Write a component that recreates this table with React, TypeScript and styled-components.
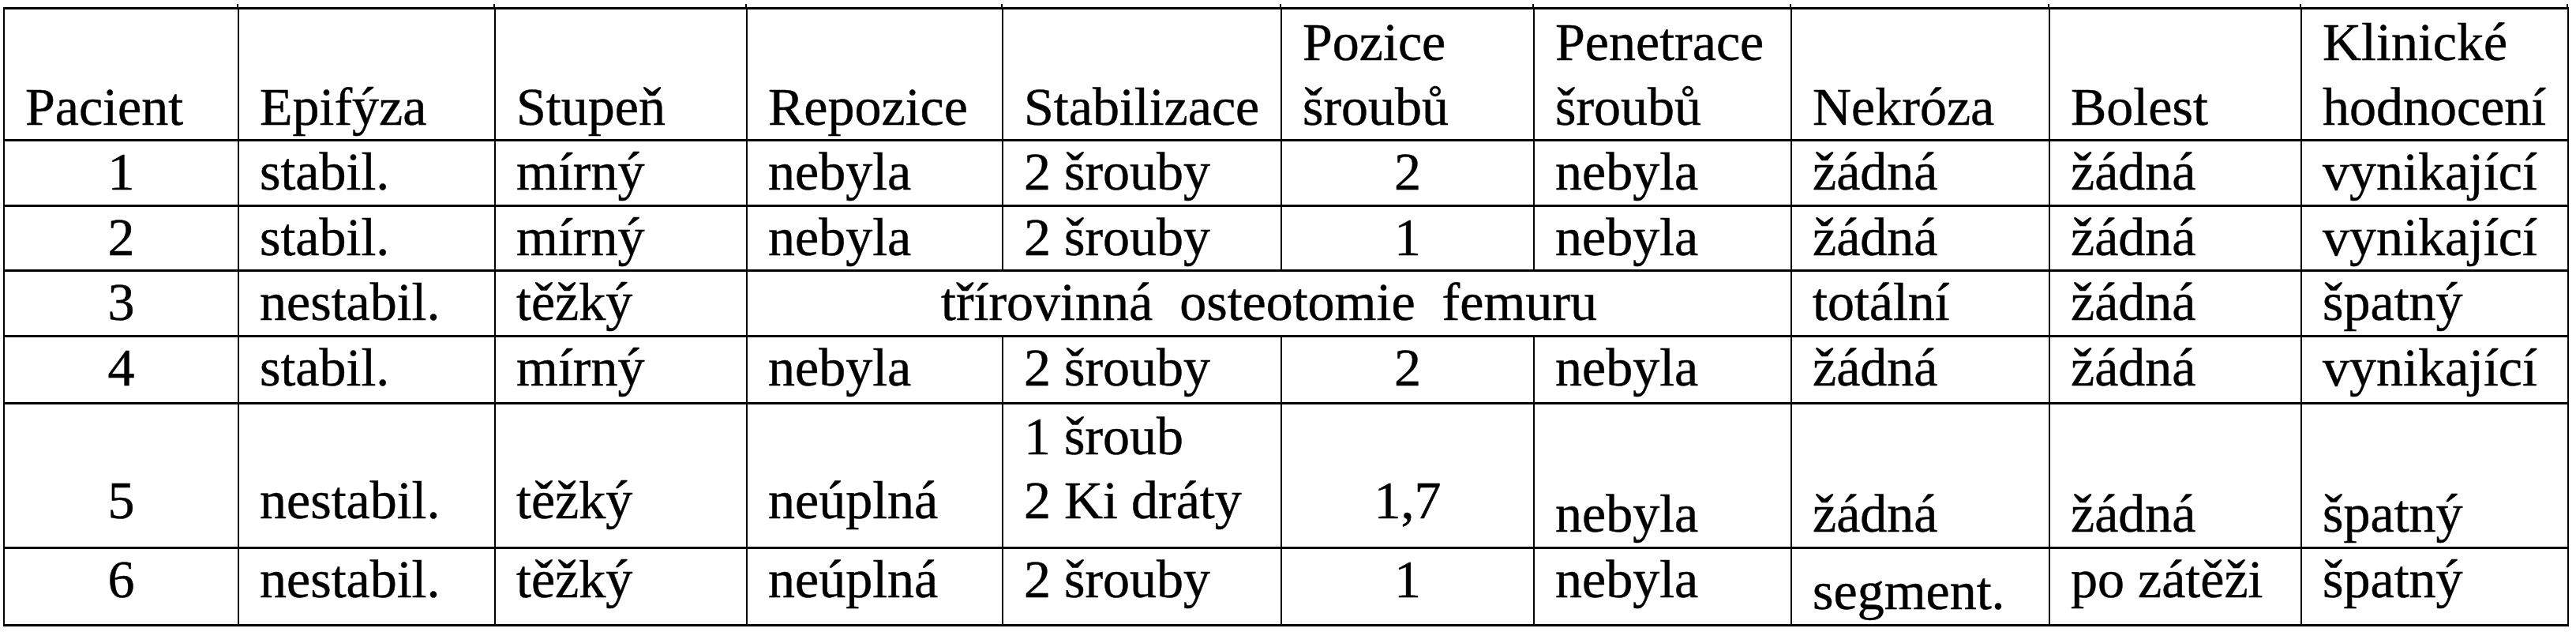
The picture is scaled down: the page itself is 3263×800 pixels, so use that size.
import React from 'react';
import styled, {createGlobalStyle, css} from 'styled-components';

const GlobalStyle = createGlobalStyle`
  html, body {
    margin: 0;
    padding: 0;
    background: #ffffff;
    font-family: "Liberation Serif", "Times New Roman", serif;
  }
`;

const Page = styled.div`
  padding: 9px 0 0 4px;
  background: #ffffff;
`;

const Table = styled.table`
  border-collapse: collapse;
  table-layout: fixed;
  width: 3248px;
  color: #000;
`;

const Row = styled.tr<{$h: number}>`
  height: ${p => p.$h}px;
`;

// little stubs where the column rules run past the outer frame
const tickUp = css`
  &::before {
    content: '';
    position: absolute;
    top: -7px;
    right: -1px;
    width: 2px;
    height: 6px;
    background: #000;
  }
`;

const tickDown = css<{$first?: boolean}>`
  &::after {
    content: '';
    position: absolute;
    bottom: -7px;
    right: -1px;
    width: 2px;
    height: 6px;
    background: #000;
    ${p => p.$first && 'box-shadow: -296px 0 0 #000;'}
  }
`;

const HeadCell = styled.th`
  position: relative;
  border-style: solid;
  border-color: #000;
  border-width: 3px 2px;
  padding: 0 0 0 26px;
  text-align: left;
  vertical-align: bottom;
  font-family: "Liberation Serif", "Times New Roman", serif;
  font-size: 68px;
  font-weight: 400;
  line-height: 82px;
  white-space: nowrap;
  -webkit-text-stroke: 0.5px #000;
  ${tickUp}
`;

const Cell = styled.td<{
  $center?: boolean;
  $valign?: string;
  $pt?: number;
  $pb?: number;
  $lh?: number;
  $last?: boolean;
  $first?: boolean;
}>`
  position: relative;
  border-style: solid;
  border-color: #000;
  border-width: 3px 2px;
  padding: ${p => `${p.$pt || 0}px 0 ${p.$pb || 0}px ${p.$center ? 0 : 26}px`};
  text-align: ${p => (p.$center ? 'center' : 'left')};
  vertical-align: ${p => p.$valign || 'top'};
  font-family: "Liberation Serif", "Times New Roman", serif;
  font-size: 68px;
  line-height: ${p => p.$lh || 76}px;
  white-space: pre;
  -webkit-text-stroke: 0.5px #000;
  ${p => p.$last && tickDown}
`;

const widths = [297, 325, 319, 324, 353, 320, 326, 327, 319, 338];

const headers = [
  'Pacient',
  'Epifýza',
  'Stupeň',
  'Repozice',
  'Stabilizace',
  'Pozice\nšroubů',
  'Penetrace\nšroubů',
  'Nekróza',
  'Bolest',
  'Klinické\nhodnocení',
];

const simpleRows = [
  {h: 83, cells: ['1', 'stabil.', 'mírný', 'nebyla', '2 šrouby', '2', 'nebyla', 'žádná', 'žádná', 'vynikající']},
  {h: 82, cells: ['2', 'stabil.', 'mírný', 'nebyla', '2 šrouby', '1', 'nebyla', 'žádná', 'žádná', 'vynikající']},
];

const centered = (i: number) => i === 0 || i === 5;

const App = () => {
  return (
    <Page>
      <GlobalStyle />
      <Table>
        <colgroup>
          {widths.map((w, i) => (
            <col key={i} style={{width: w}} />
          ))}
        </colgroup>
        <thead>
          <Row $h={163}>
            {headers.map(h => (
              <HeadCell key={h}>
                {h.split('\n').map((line, i) => (
                  <React.Fragment key={i}>
                    {i > 0 && <br />}
                    {line}
                  </React.Fragment>
                ))}
              </HeadCell>
            ))}
          </Row>
        </thead>
        <tbody>
          {simpleRows.map((r, ri) => (
            <Row $h={r.h} key={ri}>
              {r.cells.map((c, i) => (
                <Cell key={i} $center={centered(i)}>{c}</Cell>
              ))}
            </Row>
          ))}
          <Row $h={83}>
            <Cell $center>3</Cell>
            <Cell>nestabil.</Cell>
            <Cell>těžký</Cell>
            <Cell colSpan={4} $center>{'třírovinná  osteotomie  femuru'}</Cell>
            <Cell>totální</Cell>
            <Cell>žádná</Cell>
            <Cell>špatný</Cell>
          </Row>
          <Row $h={85}>
            {['4', 'stabil.', 'mírný', 'nebyla', '2 šrouby', '2', 'nebyla', 'žádná', 'žádná', 'vynikající'].map((c, i) => (
              <Cell key={i} $center={centered(i)}>{c}</Cell>
            ))}
          </Row>
          <Row $h={179}>
            <Cell $center $valign="bottom" $pb={21}>5</Cell>
            <Cell $valign="bottom" $pb={21}>nestabil.</Cell>
            <Cell $valign="bottom" $pb={21}>těžký</Cell>
            <Cell $valign="bottom" $pb={21}>neúplná</Cell>
            <Cell $valign="bottom" $pb={18} $lh={81}>{'1 šroub\n2 Ki dráty'}</Cell>
            <Cell $center $valign="bottom" $pb={21}>1,7</Cell>
            <Cell $valign="bottom" $pb={4}>nebyla</Cell>
            <Cell $valign="bottom" $pb={4}>žádná</Cell>
            <Cell $valign="bottom" $pb={4}>žádná</Cell>
            <Cell $valign="bottom" $pb={4}>špatný</Cell>
          </Row>
          <Row $h={98}>
            <Cell $center $last $first>6</Cell>
            <Cell $last>nestabil.</Cell>
            <Cell $last>těžký</Cell>
            <Cell $last>neúplná</Cell>
            <Cell $last>2 šrouby</Cell>
            <Cell $center $last>1</Cell>
            <Cell $last>nebyla</Cell>
            <Cell $pt={15} $last>segment.</Cell>
            <Cell $last>po zátěži</Cell>
            <Cell $last>špatný</Cell>
          </Row>
        </tbody>
      </Table>
    </Page>
  );
};

export default App;
